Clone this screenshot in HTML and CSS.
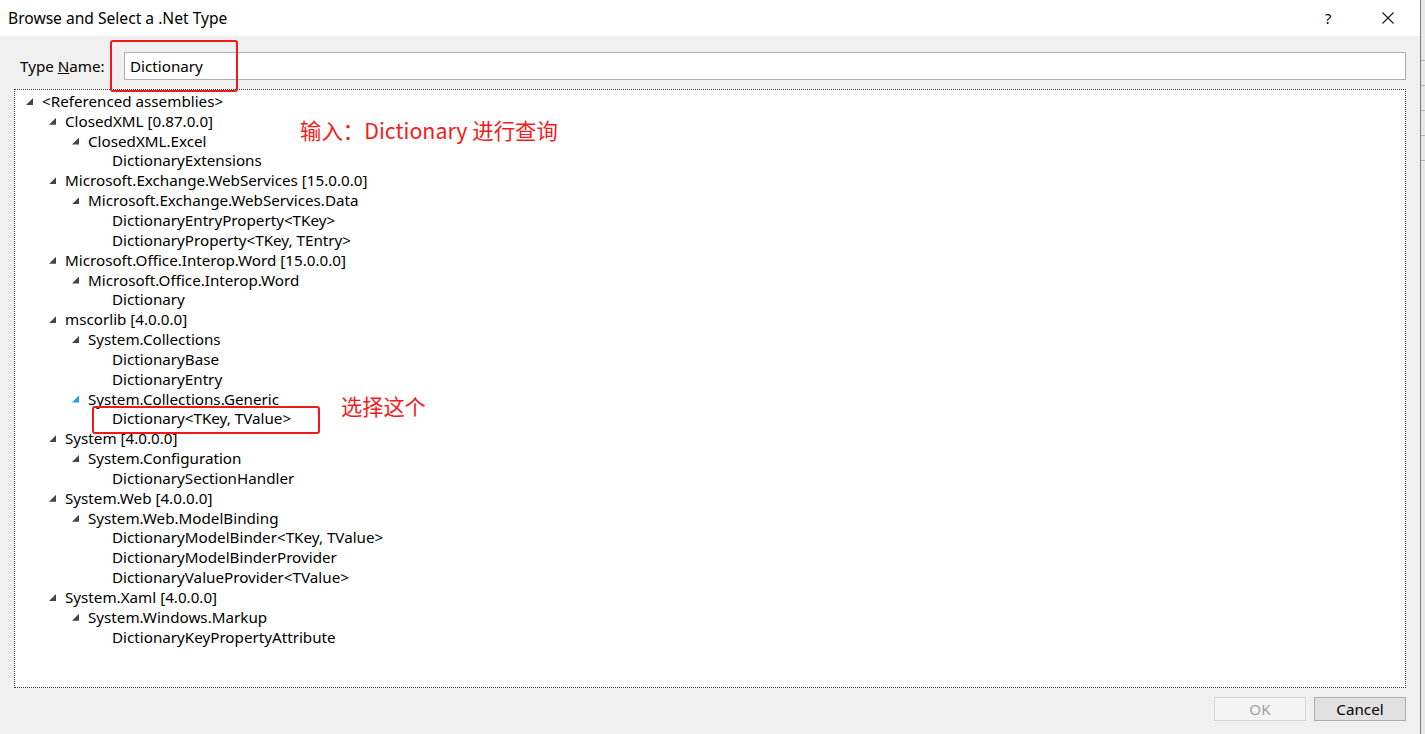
FILE: index.html
```html
<!DOCTYPE html>
<html>
<head>
<meta charset="utf-8">
<link rel="stylesheet" href="styles.css">
</head>
<body>
<div class="screen">
  <div class="dialog">
    <div class="titlebar">
      <span class="title">Browse and Select a .Net Type</span>
      <span class="tb-help">?</span>
      <span class="tb-close">
        <svg width="12" height="12" viewBox="0 0 12 12"><path d="M0.5 0.5 L11.5 11.5 M11.5 0.5 L0.5 11.5" stroke="#1a1a1a" stroke-width="1.1" fill="none"/></svg>
      </span>
    </div>
    <div class="content">
      <div class="name-row">
        <label class="name-label">Type <u>N</u>ame:</label>
        <div class="textbox">Dictionary</div>
      </div>
      <div class="tree">
        <div class="row l0"><span class="tri"></span><span class="txt">&lt;Referenced assemblies&gt;</span></div>
        <div class="row l1"><span class="tri"></span><span class="txt">ClosedXML [0.87.0.0]</span></div>
        <div class="row l2"><span class="tri"></span><span class="txt">ClosedXML.Excel</span></div>
        <div class="row l3"><span class="txt">DictionaryExtensions</span></div>
        <div class="row l1"><span class="tri"></span><span class="txt">Microsoft.Exchange.WebServices [15.0.0.0]</span></div>
        <div class="row l2"><span class="tri"></span><span class="txt">Microsoft.Exchange.WebServices.Data</span></div>
        <div class="row l3"><span class="txt">DictionaryEntryProperty&lt;TKey&gt;</span></div>
        <div class="row l3"><span class="txt">DictionaryProperty&lt;TKey, TEntry&gt;</span></div>
        <div class="row l1"><span class="tri"></span><span class="txt">Microsoft.Office.Interop.Word [15.0.0.0]</span></div>
        <div class="row l2"><span class="tri"></span><span class="txt">Microsoft.Office.Interop.Word</span></div>
        <div class="row l3"><span class="txt">Dictionary</span></div>
        <div class="row l1"><span class="tri"></span><span class="txt">mscorlib [4.0.0.0]</span></div>
        <div class="row l2"><span class="tri"></span><span class="txt">System.Collections</span></div>
        <div class="row l3"><span class="txt">DictionaryBase</span></div>
        <div class="row l3"><span class="txt">DictionaryEntry</span></div>
        <div class="row l2"><span class="tri hover"></span><span class="txt">System.Collections.Generic</span></div>
        <div class="row l3"><span class="txt">Dictionary&lt;TKey, TValue&gt;</span></div>
        <div class="row l1"><span class="tri"></span><span class="txt">System [4.0.0.0]</span></div>
        <div class="row l2"><span class="tri"></span><span class="txt">System.Configuration</span></div>
        <div class="row l3"><span class="txt">DictionarySectionHandler</span></div>
        <div class="row l1"><span class="tri"></span><span class="txt">System.Web [4.0.0.0]</span></div>
        <div class="row l2"><span class="tri"></span><span class="txt">System.Web.ModelBinding</span></div>
        <div class="row l3"><span class="txt">DictionaryModelBinder&lt;TKey, TValue&gt;</span></div>
        <div class="row l3"><span class="txt">DictionaryModelBinderProvider</span></div>
        <div class="row l3"><span class="txt">DictionaryValueProvider&lt;TValue&gt;</span></div>
        <div class="row l1"><span class="tri"></span><span class="txt">System.Xaml [4.0.0.0]</span></div>
        <div class="row l2"><span class="tri"></span><span class="txt">System.Windows.Markup</span></div>
        <div class="row l3"><span class="txt">DictionaryKeyPropertyAttribute</span></div>
      </div>
      <div class="buttons">
        <div class="btn disabled">OK</div>
        <div class="btn">Cancel</div>
      </div>
    </div>
    <div class="mark mark-input"></div>
    <div class="mark mark-select"></div>
    <div class="note note-input">输入：Dictionary 进行查询</div>
    <div class="note note-select">选择这个</div>
  </div>
  <div class="behind">
    <div class="bh-line"></div>
    <div class="bh-line"></div>
    <div class="bh-line"></div>
    <div class="bh-line"></div>
    <div class="bh-line"></div>
  </div>
</div>
</body>
</html>
```
FILE: styles.css
```css
html, body {
  margin: 0;
  padding: 0;
}
body {
  width: 1425px;
  height: 734px;
  overflow: hidden;
  font-family: "Noto Sans", "Open Sans", sans-serif;
  color: #000;
}
.screen {
  display: flex;
  width: 1425px;
  height: 734px;
}
.dialog {
  position: relative;
  width: 1421px;
  height: 734px;
  box-sizing: border-box;
  border-right: 1px solid #7a7a7a;
  background: #f0f0f0;
  display: flex;
  flex-direction: column;
}
.titlebar {
  height: 36px;
  flex: none;
  background: #fff;
  display: flex;
  align-items: center;
  font-size: 15.6px;
}
.title {
  margin-left: 8px;
  flex: 1;
  color: #000;
}
.tb-help {
  width: 12px;
  font-size: 14.5px;
  margin-right: 45px;
}
.tb-close {
  display: flex;
  margin-right: 26px;
}
.content {
  flex: 1;
  display: flex;
  flex-direction: column;
  padding: 16px 14px 0 14px;
}
.name-row {
  display: flex;
  align-items: center;
  height: 28px;
}
.name-label {
  font-size: 15.2px;
  margin-left: 6px;
  width: 104px;
}
.textbox {
  flex: 1;
  height: 28px;
  box-sizing: border-box;
  border: 1px solid #adadad;
  background: #fff;
  font-size: 15.2px;
  padding-left: 5px;
  display: flex;
  align-items: center;
}
.tree {
  margin-top: 9px;
  height: 599px;
  box-sizing: border-box;
  border: 1px dotted #333;
  background: #fff;
  padding-top: 1px;
  font-size: 15.2px;
}
.row {
  height: 19.85px;
  display: flex;
  align-items: center;
  white-space: nowrap;
}
.tri {
  width: 7px;
  height: 7px;
  background: #444;
  clip-path: polygon(100% 0, 100% 100%, 0 100%);
  margin-right: 9px;
  margin-top: 1px;
}
.tri.hover {
  background: #1ba1e2;
}
.l0 { padding-left: 11px; }
.l1 { padding-left: 34px; }
.l2 { padding-left: 57px; }
.l3 { padding-left: 97px; }
.buttons {
  display: flex;
  justify-content: flex-end;
  gap: 8px;
  margin-top: 9px;
}
.btn {
  width: 92px;
  height: 24px;
  box-sizing: border-box;
  border: 1px solid #adadad;
  background: #e1e1e1;
  font-size: 15.2px;
  display: flex;
  align-items: center;
  justify-content: center;
}
.btn.disabled {
  border-color: #d4d4d4;
  background: #f4f4f4;
  color: #a0a0a0;
}
.mark {
  position: absolute;
  border: 2px solid #f01818;
  border-radius: 3px;
  box-sizing: border-box;
}
.mark-input {
  left: 110px;
  top: 40px;
  width: 128px;
  height: 52px;
}
.mark-select {
  left: 92px;
  top: 406px;
  width: 228px;
  height: 28px;
}
.note {
  position: absolute;
  color: #f21c1c;
  font-family: "Noto Sans CJK SC", sans-serif;
  white-space: nowrap;
}
.note-input {
  left: 300px;
  top: 114px;
  font-size: 21.4px;
}
.note-select {
  left: 341px;
  top: 390px;
  font-size: 21.2px;
}
.behind {
  flex: 1;
  background: #e9e9e9;
  display: flex;
  flex-direction: column;
  padding-top: 36px;
}
.bh-line {
  height: 24px;
  border-bottom: 1px solid #b8b8b8;
}
```
